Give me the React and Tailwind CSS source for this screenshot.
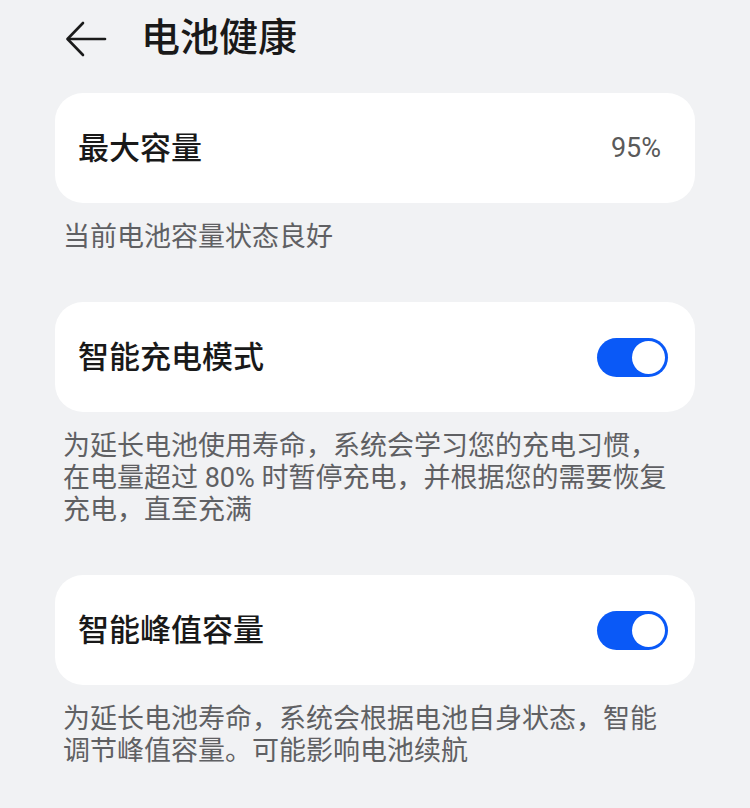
const font = { fontFamily: 'Roboto, "Noto Sans CJK SC", sans-serif' };

const Toggle = ({ on = true }) => (
  <div
    className={`flex h-[39px] w-[71px] items-center rounded-full px-[3px] ${
      on ? 'justify-end bg-[#0a59f7]' : 'justify-start bg-[#c4c6ca]'
    }`}
  >
    <div className="h-[33px] w-[33px] rounded-full bg-white" />
  </div>
);

const Card = ({ title, children }) => (
  <div className="flex h-[110px] items-center justify-between rounded-[28px] bg-white pl-[23px] pr-[27px]">
    <span className="text-[31px] font-medium leading-none text-[#191919]">{title}</span>
    {children}
  </div>
);

const Note = ({ children }) => (
  <p className="pl-[8px] pt-[18px] text-[27px] leading-[32px] text-[#5f6063]">{children}</p>
);

export default function App() {
  return (
    <div className="min-h-[808px] w-[750px] bg-[#f1f2f4]" style={font}>
      <div className="flex h-[77px] items-center">
        <svg
          className="ml-[65px]"
          width="42"
          height="36"
          viewBox="0 0 42 36"
          fill="none"
          stroke="#1a1a1a"
          strokeWidth="2.6"
          strokeLinecap="round"
          strokeLinejoin="round"
        >
          <path d="M40 18H3" />
          <path d="M18 2L2.5 18L18 34" />
        </svg>
        <h1 className="ml-[34px] text-[39px] font-medium leading-none text-[#191919]">电池健康</h1>
      </div>

      <div className="mx-[55px] mt-[16px]">
        <section>
          <Card title="最大容量">
            <span className="mr-[7px] text-[27px] leading-none text-[#5a5a5a]">95%</span>
          </Card>
          <Note>当前电池容量状态良好</Note>
        </section>

        <section className="mt-[49px]">
          <Card title="智能充电模式">
            <Toggle />
          </Card>
          <Note>
            为延长电池使用寿命，系统会学习您的充电习惯，
            <br />
            在电量超过 80% 时暂停充电，并根据您的需要恢复
            <br />
            充电，直至充满
          </Note>
        </section>

        <section className="mt-[49px]">
          <Card title="智能峰值容量">
            <Toggle />
          </Card>
          <Note>
            为延长电池寿命，系统会根据电池自身状态，智能
            <br />
            调节峰值容量。可能影响电池续航
          </Note>
        </section>
      </div>
    </div>
  );
}
